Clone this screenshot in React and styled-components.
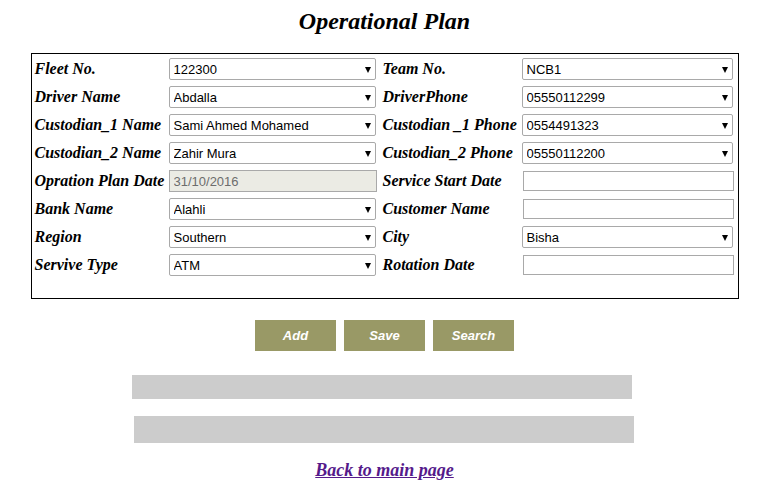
import styled, { createGlobalStyle } from "styled-components";

const Global = createGlobalStyle`
  html, body { margin: 0; padding: 0; background: #fff; }
  body { font-family: "Liberation Serif", "Times New Roman", serif; color: #000; }
`;

const Page = styled.div`
  width: 765px;
  padding-left: 4px;
  box-sizing: border-box;
  display: flex;
  flex-direction: column;
  align-items: center;
`;

const Title = styled.h2`
  margin: 7px 0 18px;
  font-size: 24px;
  line-height: 28px;
  font-weight: bold;
  font-style: italic;
`;

const FormBox = styled.div`
  width: 708px;
  box-sizing: border-box;
  border: 1px solid #000;
  padding: 4px 4px 22px 2px;
  display: grid;
  grid-template-columns: 135px 213px 140px 211px;
  grid-auto-rows: 22px;
  row-gap: 6px;
  align-items: center;
`;

const Label = styled.label`
  font-size: 16px;
  font-weight: bold;
  font-style: italic;
  white-space: nowrap;
  padding-left: 1px;
`;

const SelectWrap = styled.div`
  position: relative;
  width: ${(p) => p.$w}px;
  height: 22px;
`;

const Select = styled.select`
  appearance: none;
  width: 100%;
  height: 100%;
  box-sizing: border-box;
  border: 1px solid #a9a9a9;
  border-radius: 2px;
  background: #fff;
  padding: 0 16px 0 4px;
  margin: 0;
  font-family: "Liberation Sans", Arial, sans-serif;
  font-size: 13px;
  color: #000;
`;

const Arrow = styled.span`
  position: absolute;
  right: 5px;
  top: 9px;
  width: 0;
  height: 0;
  border-left: 3.5px solid transparent;
  border-right: 3.5px solid transparent;
  border-top: 6px solid #000;
  pointer-events: none;
`;

const TextInput = styled.input`
  width: ${(p) => p.$w}px;
  height: ${(p) => (p.disabled ? 22 : 20)}px;
  box-sizing: border-box;
  margin: 0 0 0 ${(p) => (p.disabled ? 0 : 1)}px;
  border: 1px solid #a9a9a9;
  padding: 0 4px;
  font-family: "Liberation Sans", Arial, sans-serif;
  font-size: 13px;
  color: #6d6d6d;
  background: ${(p) => (p.disabled ? "#ebebe4" : "#fff")};
`;

const Buttons = styled.div`
  display: flex;
  gap: 8px;
  margin-top: 21px;
`;

const Button = styled.button`
  width: 81px;
  height: 31px;
  border: none;
  background: #999966;
  color: #fff;
  font-family: "Liberation Sans", Arial, sans-serif;
  font-size: 13px;
  font-weight: bold;
  font-style: italic;
  padding: 0;
`;

const Bar = styled.div`
  width: 500px;
  height: ${(p) => p.$h}px;
  background: #cccccc;
  margin-top: ${(p) => p.$top}px;
  align-self: flex-start;
  margin-left: calc(50% - 250px + ${(p) => p.$shift}px);
`;

const BackLink = styled.a`
  margin-top: 17px;
  font-size: 18px;
  line-height: 20px;
  font-weight: bold;
  font-style: italic;
  color: #551a8b;
  text-decoration: underline;
`;

const DropDown = ({ value, w }) => (
  <SelectWrap $w={w}>
    <Select defaultValue={value}>
      <option>{value}</option>
    </Select>
    <Arrow />
  </SelectWrap>
);

const rows = [
  ["Fleet No.", { sel: "122300" }, "Team No.", { sel: "NCB1" }],
  ["Driver Name", { sel: "Abdalla" }, "DriverPhone", { sel: "05550112299" }],
  ["Custodian_1 Name", { sel: "Sami Ahmed Mohamed" }, "Custodian _1 Phone", { sel: "0554491323" }],
  ["Custodian_2 Name", { sel: "Zahir Mura" }, "Custodian_2 Phone", { sel: "05550112200" }],
  ["Opration Plan Date", { date: "31/10/2016" }, "Service Start Date", { text: "" }],
  ["Bank Name", { sel: "Alahli" }, "Customer Name", { text: "" }],
  ["Region", { sel: "Southern" }, "City", { sel: "Bisha" }],
  ["Servive Type", { sel: "ATM" }, "Rotation Date", { text: "" }],
];

const Field = ({ f, w }) => {
  if (f.sel !== undefined) return <DropDown value={f.sel} w={w} />;
  if (f.date !== undefined) return <TextInput $w={w + 1} disabled defaultValue={f.date} />;
  return <TextInput $w={w} defaultValue={f.text} />;
};

export default function App() {
  return (
    <>
      <Global />
      <Page>
        <Title>Operational Plan</Title>
        <FormBox>
          {rows.map(([l1, f1, l2, f2]) => [
            <Label key={l1}>{l1}</Label>,
            <Field key={l1 + "f"} f={f1} w={207} />,
            <Label key={l2}>{l2}</Label>,
            <Field key={l2 + "f"} f={f2} w={211} />,
          ])}
        </FormBox>
        <Buttons>
          <Button>Add</Button>
          <Button>Save</Button>
          <Button>Search</Button>
        </Buttons>
        <Bar $h={24} $top={24} $shift={-3} />
        <Bar $h={27} $top={17} $shift={-1} />
        <BackLink href="#">Back to main page</BackLink>
      </Page>
    </>
  );
}
